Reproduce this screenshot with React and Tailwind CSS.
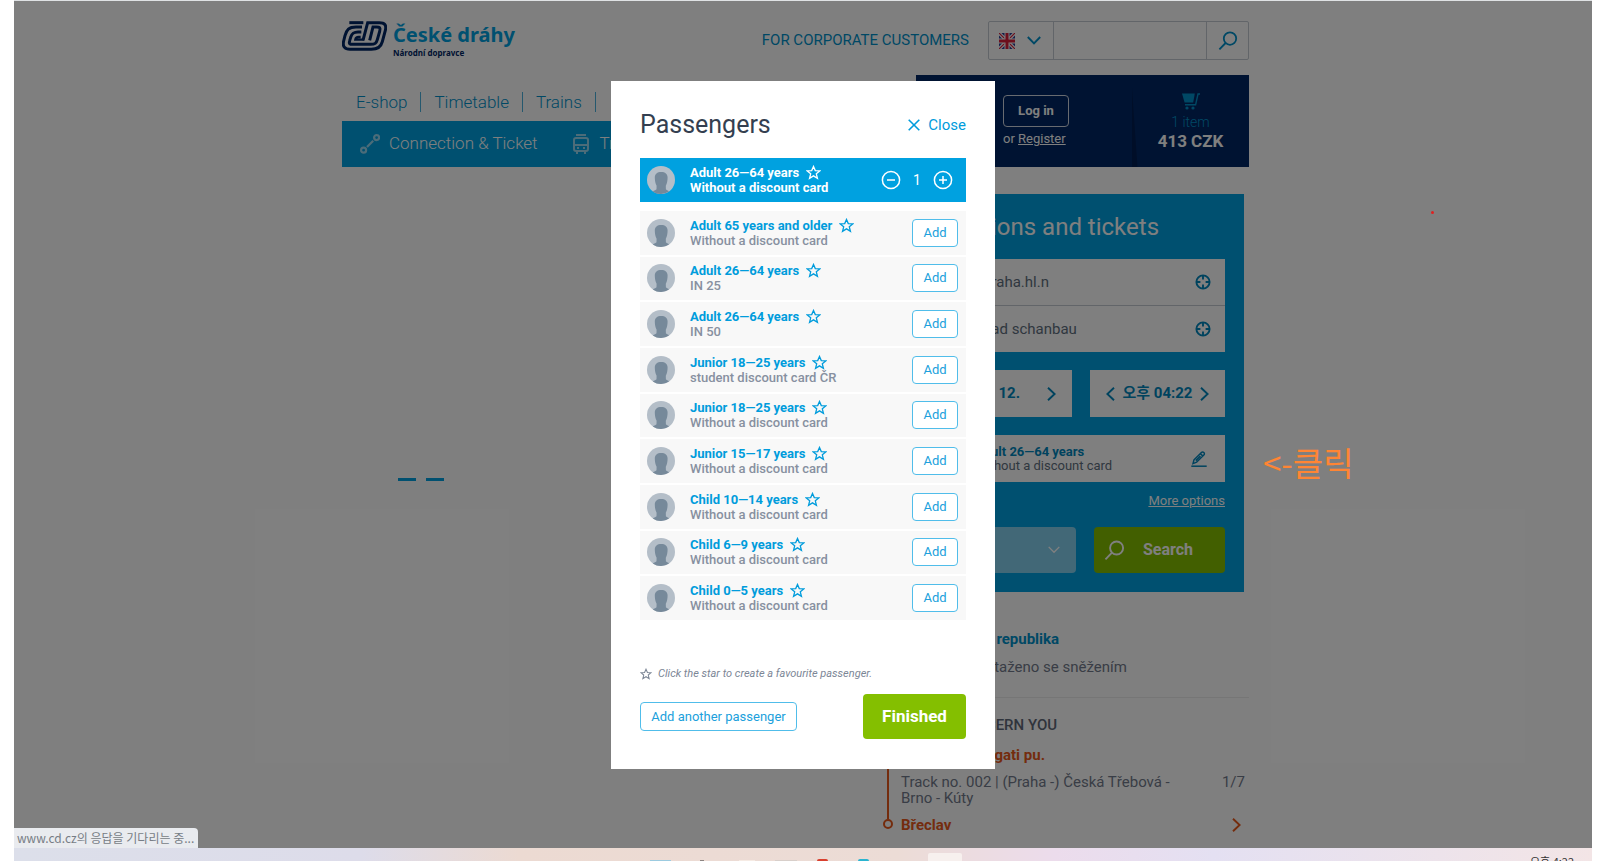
const passengers = [
  ["Adult 65 years and older", "Without a discount card"],
  ["Adult 26—64 years", "IN 25"],
  ["Adult 26—64 years", "IN 50"],
  ["Junior 18—25 years", "student discount card ČR"],
  ["Junior 18—25 years", "Without a discount card"],
  ["Junior 15—17 years", "Without a discount card"],
  ["Child 10—14 years", "Without a discount card"],
  ["Child 6—9 years", "Without a discount card"],
  ["Child 0—5 years", "Without a discount card"],
];

function StarIcon({ className }) {
  return (
    <svg viewBox="0 0 16 16" className={className} fill="none" stroke="currentColor" strokeWidth="1.4" strokeLinejoin="miter" aria-hidden="true">
      <path d="M8 1.6 L9.9 6 L14.7 6.3 L11 9.4 L12.2 14.2 L8 11.6 L3.8 14.2 L5 9.4 L1.3 6.3 L6.1 6 Z" />
    </svg>
  );
}

function Avatar() {
  return (
    <svg viewBox="0 0 28 28" className="size-7 shrink-0" aria-hidden="true">
      <circle cx="14" cy="14" r="14" fill="#b4bec8" />
      <path d="M14.2 6 C18.2 6 20.6 8 20.6 11.6 C20.6 14.8 20 17.6 18.8 19.8 L18.9 23.2 C19.4 24 20.8 24.2 22.2 25.2 A14 14 0 0 1 5.8 25.4 C7.4 24.2 9 24 9.5 23.2 L9.6 19.8 C8.4 17.6 7.8 14.8 7.8 11.6 C7.8 8 10.2 6 14.2 6 Z" fill="#76899a" />
    </svg>
  );
}

function Magnifier({ className }) {
  return (
    <svg viewBox="0 0 20 20" className={className} fill="none" stroke="currentColor" strokeWidth="1.8" aria-hidden="true">
      <circle cx="12" cy="7.6" r="6.2" />
      <path d="M7.6 12 L1.4 18.4" />
    </svg>
  );
}

function Target() {
  return (
    <svg viewBox="0 0 16 16" className="size-4 text-[#0086bd]" fill="none" stroke="currentColor" strokeWidth="1.9" aria-hidden="true">
      <circle cx="8" cy="8" r="6.6" />
      <path d="M8 1.5 V5.4 M8 10.6 V14.5 M1.5 8 H5.4 M10.6 8 H14.5" />
    </svg>
  );
}

function Chevron({ left }) {
  return (
    <svg viewBox="0 0 9 14" className={left ? "h-3.5 w-[9px] rotate-180" : "h-3.5 w-[9px]"} fill="none" stroke="currentColor" strokeWidth="1.9" aria-hidden="true">
      <path d="M1 .8 L7.6 7 L1 13.2" />
    </svg>
  );
}

function Flag() {
  return (
    <svg viewBox="0 0 16 16" className="size-4" aria-hidden="true">
      <rect width="16" height="16" fill="#2a3f94" />
      <path d="M0 0 L16 16 M16 0 L0 16" stroke="#fff" strokeWidth="3.4" />
      <path d="M0 0 L16 16 M16 0 L0 16" stroke="#d81e3a" strokeWidth="1.2" />
      <path d="M8 0 V16 M0 8 H16" stroke="#fff" strokeWidth="5" />
      <path d="M8 0 V16 M0 8 H16" stroke="#d81e3a" strokeWidth="3" />
    </svg>
  );
}

function Logo() {
  return (
    <a href="#home" className="flex items-start gap-1.5">
      <svg viewBox="0 0 135 90" className="h-[30px] w-[45px]" fill="none" stroke="#002664" strokeWidth="9" aria-hidden="true">
        <path d="M22 5 H64" />
        <path d="M60 18 H42 C20 18 14 26 9 44 L5 60 C1 76 8 85 24 85 H88 C108 85 117 78 121 62 L130 28 C134 12 128 5 112 5 H77 L63 58" />
        <path d="M58 33 H48 C35 33 30 37 26 49 L23 59 C20 68 23 70 32 70 H86 C99 70 103 67 106 56 L113 31 C116 20 113 18 104 18 H93 L83 58" />
        <path d="M56 48 H50 C43 48 41 49 40 56 H66" strokeWidth="7" />
      </svg>
      <span className="flex flex-col font-['Noto_Sans',sans-serif]">
        <span className="text-xl leading-7 font-bold text-[#00a1e0]">České dráhy</span>
        <span className="text-[8px] leading-2 font-bold text-[#002664]">Národní dopravce</span>
      </span>
    </a>
  );
}

function TopBar() {
  return (
    <div className="flex h-[74px] items-start justify-between pt-5">
      <Logo />
      <div className="flex h-[39px] items-center">
        <a href="#corporate" className="mr-[19px] text-[15px] text-[#0091ca]">FOR CORPORATE CUSTOMERS</a>
        <div className="flex h-full w-[261px] items-stretch rounded-xs border border-[#c4cbd2]">
          <button aria-label="Language" className="flex w-[65px] items-center gap-3 border-r border-[#c4cbd2] pl-2.5 text-[#0091ca]">
            <Flag />
            <svg viewBox="0 0 14 9" className="w-3.5" fill="none" stroke="currentColor" strokeWidth="1.9" aria-hidden="true"><path d="M.8 1 L7 7.4 L13.2 1" /></svg>
          </button>
          <input aria-label="Search the site" className="min-w-0 flex-1 outline-none" />
          <button aria-label="Search" className="flex w-[42px] items-center justify-center border-l border-[#c4cbd2] text-[#0091ca]"><Magnifier className="size-5" /></button>
        </div>
      </div>
    </div>
  );
}

function Navigation() {
  return (
    <div className="flex">
      <div className="min-w-0 flex-1">
        <nav className="flex h-[46px] items-center pt-2 pl-px text-[17px] font-light text-[#0091ca]">
          <a href="#eshop" className="border-r border-[#4ab1dc] px-[13px] leading-5">E-shop</a>
          <a href="#timetable" className="border-r border-[#4ab1dc] px-[13px] leading-5">Timetable</a>
          <a href="#trains" className="border-r border-[#4ab1dc] px-[13px] leading-5">Trains</a>
        </nav>
        <nav className="flex h-[46px] items-center bg-[#00a1e0] pl-[18px] text-[17px] font-light text-white">
          <a href="#connection" className="flex items-center gap-[9px]">
            <svg viewBox="0 0 20 20" className="size-5 opacity-60" fill="none" stroke="currentColor" strokeWidth="2.2" aria-hidden="true">
              <circle cx="3.6" cy="16.2" r="2.5" /><circle cx="16.6" cy="3.6" r="2.5" /><path d="M7 13 L13.2 6.8" />
            </svg>
            Connection &amp; Ticket
          </a>
          <a href="#train" className="ml-[35px] flex items-center gap-[11px]">
            <svg viewBox="0 0 16 20" className="h-5 w-4 opacity-60" fill="none" stroke="currentColor" strokeWidth="2" aria-hidden="true">
              <path d="M3 1 H13" /><rect x="1" y="4" width="14" height="13" rx="2" /><path d="M1 11 H15 M4 17 V20 M12 17 V20" /><path d="M4 14 H6 M10 14 H12" />
            </svg>
            Train
          </a>
        </nav>
      </div>
      <div className="flex w-[333px] justify-between bg-[#002664] text-white">
        <div className="ml-[87px] flex flex-col items-start pt-5">
          <button className="h-8 w-[66px] rounded-sm border border-[#d0d6e0] text-[13px] leading-4 font-bold">Log in</button>
          <p className="mt-1 text-[13px] leading-4">or <a href="#register" className="underline">Register</a></p>
        </div>
        <div className="flex w-[117px] bg-[linear-gradient(86deg,#001d50_0,#001d50_5px,#002664_6px)]">
          <a href="#cart" className="flex flex-1 flex-col items-center pt-[18px]">
            <svg viewBox="0 0 20 17" className="h-[17px] w-5 text-[#0091ca]" aria-hidden="true">
              <path d="M1 .5 H13.8 L12.2 9.5 H3.6 Z" fill="currentColor" />
              <path d="M19 1 H17 L14.6 11.8 H4" fill="none" stroke="currentColor" strokeWidth="1.4" />
              <circle cx="6" cy="15" r="1.6" fill="currentColor" /><circle cx="12" cy="15" r="1.6" fill="currentColor" />
            </svg>
            <span className="mt-1 text-sm leading-4 font-light text-[#0091ca]">1 item</span>
            <span className="mt-px text-[17px] leading-5 font-bold">413 CZK</span>
          </a>
        </div>
      </div>
    </div>
  );
}

function StationField({ label, value }) {
  return (
    <div className="flex h-full items-center pr-3.5 pl-[84px]">
      <input aria-label={label} defaultValue={value} className="min-w-0 flex-1 outline-none" />
      <Target />
    </div>
  );
}

function TicketSearch() {
  return (
    <section className="mr-[5px] bg-[#00a1e0] px-[19px] pb-[19px] text-[#5f6f80]">
      <h2 className="pt-[17px] pb-4 pl-1 text-2xl leading-8 text-white">Connections and tickets</h2>
      <div className="grid h-[93px] grid-rows-2 divide-y divide-[#c4cbd2] bg-white text-[15px]">
        <StationField label="From" value="Praha.hl.n" />
        <StationField label="To" value="Bad schanbau" />
      </div>
      <div className="mt-[18px] flex gap-[18px] text-[15px] font-bold text-[#0086bd]">
        <div className="flex h-[47px] flex-1 items-center justify-between bg-white px-4">
          <button aria-label="Previous day"><Chevron left /></button>
          <span className="ml-auto pr-[27px]">12.</span>
          <button aria-label="Next day"><Chevron /></button>
        </div>
        <div className="flex h-[47px] w-[135px] items-center justify-between bg-white px-4 font-[Roboto,'Noto_Sans_CJK_KR',sans-serif]">
          <button aria-label="Earlier"><Chevron left /></button>
          <span>오후 04:22</span>
          <button aria-label="Later"><Chevron /></button>
        </div>
      </div>
      <div className="mt-[18px] flex h-[47px] items-center justify-between bg-white pr-[18px] pl-[77px] text-[13px] leading-[14px]">
        <div>
          <p className="font-bold text-[#0086bd]">Adult 26—64 years</p>
          <p>Without a discount card</p>
        </div>
        <button aria-label="Edit passengers" className="text-[#0086bd]">
          <svg viewBox="0 0 16 16" className="size-4" fill="none" stroke="currentColor" strokeWidth="1.5" aria-hidden="true">
            <path d="M.3 15.2 H15.7" />
            <path d="M2 12.6 L3 8.8 L10.4 1.5 C11.2 .8 12 .8 12.8 1.5 C13.6 2.2 13.6 3.2 12.8 4 L5.6 11.2 Z M9.4 2.6 L11.8 5 M4.8 9.6 L9.4 5" />
          </svg>
        </button>
      </div>
      <div className="flex h-[45px] items-center justify-end pb-2 text-[13px] text-white">
        <a href="#more" className="underline">More options</a>
      </div>
      <div className="flex gap-[18px]">
        <button aria-label="Search settings" className="flex h-[46px] flex-1 items-center justify-end rounded-sm bg-[#84d0ef] pr-4 text-white">
          <svg viewBox="0 0 14 9" className="w-3" fill="none" stroke="currentColor" strokeWidth="1.6" aria-hidden="true"><path d="M.8 1 L7 7.4 L13.2 1" /></svg>
        </button>
        <button className="flex h-[46px] w-[131px] items-center rounded-sm bg-[#84bf00] pl-2.5 text-base font-bold text-white">
          <Magnifier className="mr-[18px] size-[21px]" />
          Search
        </button>
      </div>
    </section>
  );
}

function News() {
  return (
    <section className="text-[15px] text-[#737b8c]">
      <div className="border-b border-[#ececec] pt-[35px] pb-[18px] pl-[72px]">
        <p className="leading-6 font-bold text-[#0091ca]">Česká republika</p>
        <p className="mt-1 pl-[26px] leading-6">Zataženo se sněžením</p>
      </div>
      <h3 className="mt-[15px] pl-1 leading-6 font-medium text-[#606878]">THIS MAY CONCERN YOU</h3>
      <div className="mt-2 flex">
        <div className="flex w-[22px] flex-col items-center pt-4 pr-1 pb-1.5">
          <span className="w-0.5 flex-1 bg-[#e8581a]" />
          <span className="size-2.5 rounded-full border-2 border-[#e8581a]" />
        </div>
        <div className="flex-1">
          <a href="#track" className="block w-36 text-right leading-5 font-bold text-[#e8581a]">Praha - gati pu.</a>
          <div className="mt-[9px] flex justify-between pr-1 leading-4">
            <p className="w-[280px]">Track no. 002 | (Praha -) Česká Třebová - Brno - Kúty</p>
            <span>1/7</span>
          </div>
          <div className="mt-[9px] flex items-center justify-between pr-2 leading-5 font-bold text-[#e8581a]">
            Břeclav
            <Chevron />
          </div>
        </div>
      </div>
    </section>
  );
}

function PassengerName({ name, card, selected }) {
  return (
    <div className="ml-[15px] flex-1 text-[13px] leading-[15px]">
      <div className={selected ? "flex items-center gap-[7px] font-bold" : "flex items-center gap-[7px] font-bold text-[#009cdc]"}>
        {name}
        <button aria-label="Create favourite" className="h-[15px]"><StarIcon className="size-[15px]" /></button>
      </div>
      <p className={selected ? "font-bold" : "font-medium text-[#8790a0]"}>{card}</p>
    </div>
  );
}

function Modal() {
  return (
    <section role="dialog" aria-label="Passengers" className="mt-20 w-96 bg-white px-[29px] pt-7 pb-[30px]">
      <header className="flex items-center justify-between">
        <h1 className="text-[25px] leading-8 text-[#343f50]">Passengers</h1>
        <button className="flex items-center gap-2 text-[15px] leading-5 text-[#009cdc]">
          <svg viewBox="0 0 12 12" className="size-3" fill="none" stroke="currentColor" strokeWidth="1.6" aria-hidden="true"><path d="M.7 .7 L11.3 11.3 M11.3 .7 L.7 11.3" /></svg>
          Close
        </button>
      </header>
      <div className="mt-[17px] flex h-11 items-center bg-[#00a1e0] px-[7px] text-white">
        <Avatar />
        <PassengerName name="Adult 26—64 years" card="Without a discount card" selected />
        <div className="flex items-center pr-1.5 text-sm">
          <button aria-label="Remove one">
            <svg viewBox="0 0 20 20" className="size-5" fill="none" stroke="currentColor" strokeWidth="1.5" aria-hidden="true"><circle cx="10" cy="10" r="8.6" /><path d="M6 10 H14" /></svg>
          </button>
          <span className="w-8 text-center">1</span>
          <button aria-label="Add one">
            <svg viewBox="0 0 20 20" className="size-5" fill="none" stroke="currentColor" strokeWidth="1.5" aria-hidden="true"><circle cx="10" cy="10" r="8.6" /><path d="M6 10 H14 M10 6 V14" /></svg>
          </button>
        </div>
      </div>
      <ul className="mt-[9px] grid h-[409px] auto-rows-fr gap-0.5">
        {passengers.map(([name, card], i) => (
          <li key={i} className="flex items-center bg-[#f8f8f8] pr-2 pl-[7px]">
            <Avatar />
            <PassengerName name={name} card={card} />
            <button className="h-7 w-[46px] rounded-sm border border-[#50bdea] bg-white text-[13px] leading-4 text-[#209fdc]">Add</button>
          </li>
        ))}
      </ul>
      <p className="mt-[46px] flex items-center gap-1.5 text-[11px] leading-4 text-[#7c8696] italic">
        <StarIcon className="size-3" />
        Click the star to create a favourite passenger.
      </p>
      <footer className="mt-3 flex items-center justify-between">
        <button className="h-[29px] w-[157px] rounded-sm border border-[#50bdea] text-[13px] leading-4 text-[#209fdc]">Add another passenger</button>
        <button className="h-[45px] w-[103px] rounded-sm bg-[#84bf00] text-[17px] font-bold text-white">Finished</button>
      </footer>
    </section>
  );
}

function Taskbar() {
  return (
    <footer className="flex h-[13px] shrink-0 items-end justify-between overflow-hidden bg-[linear-gradient(90deg,#dcdfea_0%,#dddcea_22%,#ecdad2_32%,#ecdcd6_56%,#ecdcec_66%,#e4e0f2_76%,#f3e5e6_100%)] pr-[18px] pl-[636px]">
      <div className="flex items-end">
        <span className="h-px w-[21px] bg-[#9ccbe0]" />
        <span className="ml-[29px] h-px w-1 bg-[#8c8482]" />
        <span className="ml-[35px] h-px w-4 bg-[#f6ebe4]" />
        <span className="ml-5 h-px w-[22px] bg-[#d8cfca]" />
        <span className="ml-5 h-0.5 w-[11px] rounded-t-full bg-[#d9402f]" />
        <span className="ml-[30px] h-0.5 w-[11px] rounded-t-full bg-[#2ab4d0]" />
        <span className="ml-[59px] h-2 w-[34px] rounded-t-xs bg-[#f7f0ee]" />
      </div>
      <span className="h-1.5 font-['Noto_Sans_CJK_KR',sans-serif] text-[11px] leading-3 text-[#333333]">오후 4:22</span>
    </footer>
  );
}

export default function App() {
  return (
    <div className="flex h-screen flex-col overflow-hidden bg-white pr-5 pl-3.5 font-[Roboto,sans-serif]">
      <main className="relative min-h-0 flex-1 overflow-hidden border-t border-[#dfe2e4] pr-[15px]">
        <div className="mx-auto w-[907px] max-w-full">
          <TopBar />
          <Navigation />
          <div className="mt-[27px] flex justify-between">
            <div className="mt-[284px] ml-14 flex h-[3px] gap-2.5">
              <span className="w-[18px] bg-[#00a1e0]" />
              <span className="w-[18px] bg-[#00a1e0]" />
            </div>
            <aside className="w-[370px]">
              <TicketSearch />
              <News />
            </aside>
          </div>
        </div>
        <div className="absolute inset-0 flex items-start justify-center bg-black/50">
          <Modal />
        </div>
        <span className="absolute top-[210px] left-[1417px] size-[3px] rounded-full bg-[#e02020]" />
        <p className="absolute top-[439px] left-[1249px] font-['Noto_Sans_CJK_KR',sans-serif] text-[33px] leading-[44px] text-[#ff8534]">&lt;-클릭</p>
        <p className="absolute bottom-0 left-0 h-5 w-[184px] rounded-tr-sm bg-[#e9ebef] pl-[3px] font-['Noto_Sans_CJK_KR',sans-serif] text-xs leading-5 text-[#777d85]">www.cd.cz의 응답을 기다리는 중...</p>
      </main>
      <Taskbar />
    </div>
  );
}
